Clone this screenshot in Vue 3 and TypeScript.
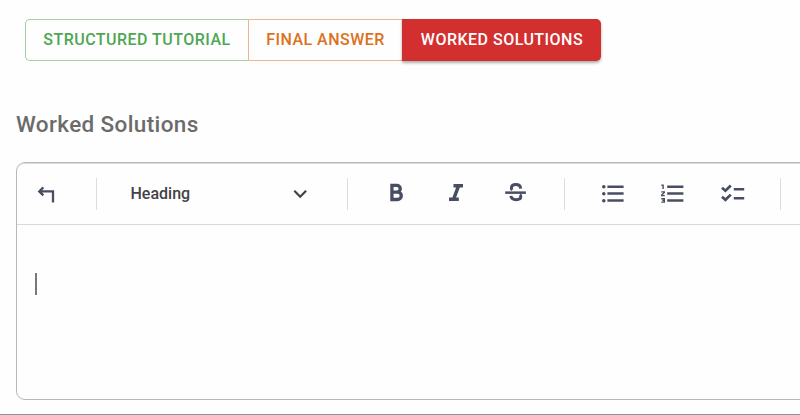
<script setup lang="ts">
import { ref } from 'vue'

interface Tab {
  id: string
  label: string
}

const tabs: Tab[] = [
  { id: 'tutorial', label: 'Structured Tutorial' },
  { id: 'answer', label: 'Final Answer' },
  { id: 'worked', label: 'Worked Solutions' },
]
const active = ref('worked')
</script>

<template>
  <main class="page">
    <div class="tabs">
      <button
        v-for="tab in tabs"
        :key="tab.id"
        type="button"
        class="tab"
        :class="[tab.id, { active: active === tab.id }]"
        @click="active = tab.id"
      >{{ tab.label }}</button>
    </div>
    <h2 class="title">Worked Solutions</h2>
    <section class="editor">
      <div class="toolbar">
        <button type="button" class="tool undo" aria-label="Undo">
          <svg viewBox="0 0 28 28"><path class="line" d="M10.3 7.4 6.3 11.4l4 4M6.3 11.4H20v11" /></svg>
        </button>
        <span class="sep"></span>
        <button type="button" class="block-type">
          <span class="block-name">Heading</span>
          <svg viewBox="0 0 16 16"><path d="M2.3 4.8 8.2 10.7 14.1 4.8" /></svg>
        </button>
        <span class="sep"></span>
        <div class="group marks">
          <button type="button" class="tool" aria-label="Bold">
            <svg viewBox="0 0 28 28"><path class="bold" d="M9.9 5.4h5a3.35 3.35 0 0 1 0 6.7h-5zM9.9 12.1h5.7a3.7 3.7 0 0 1 0 7.4H9.9z" /></svg>
          </button>
          <button type="button" class="tool" aria-label="Italic">
            <svg viewBox="0 0 28 28"><path class="solid" d="M11.5 4H21v3.4h-3.2l-3.7 10.2h2.7V21H7v-3.4h3.4l3.7-10.2h-2.6z" /></svg>
          </button>
          <button type="button" class="tool" aria-label="Strikethrough">
            <svg viewBox="0 0 28 28"><path class="strike" d="M18.7 8.6C18.4 5.8 16.5 4.6 14 4.6c-2.7 0-4.6 1.4-4.6 3.6 0 .8.3 1.3.8 1.8M17.8 14.7c.7.5 1 1.1 1 1.9 0 1.9-1.9 3.1-4.7 3.1-3.1 0-4.9-1.3-5.2-3.8" /><path class="solid" d="M3.2 11.4h20.7v2.5H3.2z" /></svg>
          </button>
        </div>
        <span class="sep"></span>
        <div class="group lists">
          <button type="button" class="tool" aria-label="Bulleted list">
            <svg viewBox="0 0 28 28"><path class="line thick" d="M8.4 6.7h16.2M8.4 13.6h16.2M8.4 20.6h16.2" /><g class="solid"><circle cx="4.8" cy="6.8" r="1.8" /><circle cx="4.8" cy="13.7" r="1.8" /><circle cx="4.8" cy="20.7" r="1.8" /></g></svg>
          </button>
          <button type="button" class="tool" aria-label="Numbered list">
            <svg viewBox="0 0 28 28"><path class="line thick" d="M8.2 6.7h16.2M8.2 13.6h16.2M8.2 20.6h16.2" /><path class="digit" d="M2.4 5.3h1.7v3.6M2.3 11.9h3v.6L2.7 15v.6h3.1M2.3 18.7h3v3.4h-3M3.3 20.4h2" /></svg>
          </button>
          <button type="button" class="tool" aria-label="Check list">
            <svg viewBox="0 0 28 28"><path class="line thick" d="M14.8 9.2h10.4M14.8 18.3h10.4" /><path class="line tick" d="m3 7.7 3.4 3 5.4-5.2M3 16.8l3.4 3 5.4-5.2" /></svg>
          </button>
        </div>
        <span class="sep"></span>
      </div>
      <div class="content"><span class="caret"></span></div>
    </section>
    <div class="footer-line"></div>
  </main>
</template>

<style>
body { background: #fefefe; overflow: hidden; }
</style>

<style scoped>
* { box-sizing: border-box; }
.page {
  width: 800px;
  height: 415px;
  display: flex;
  flex-direction: column;
  overflow: hidden;
  padding: 19px 0 0 16px;
  font-family: Roboto, sans-serif;
}
button { margin: 0; padding: 0; border: 0; background: none; font: inherit; flex: none; }
.tabs { display: flex; flex: none; height: 42px; margin-left: 9px; }
.tab {
  padding-bottom: 1px;
  border: 1px solid;
  border-right: 0;
  font-size: 16px;
  font-weight: 500;
  letter-spacing: 0.48px;
  text-transform: uppercase;
  white-space: nowrap;
}
.tutorial { width: 223px; color: #4fa653; border-color: #a1d1a3; border-radius: 5px 0 0 5px; }
.answer { width: 154px; color: #dc711c; border-color: #edb491; }
.worked { width: 199px; color: #d32f2f; border-radius: 0 5px 5px 0; }
.active { background: #d32f2f; border-color: #c93230; color: #fff; box-shadow: 0 2px 3px rgba(0, 0, 0, 0.32); }
.title {
  margin: 47px 0 0;
  flex: none;
  height: 32px;
  line-height: 32px;
  font-size: 22.5px;
  font-weight: 500;
  letter-spacing: 0.37px;
  color: #6b6b6b;
}
.editor {
  flex: none;
  width: 800px;
  height: 238px;
  margin-top: 22px;
  border: 1px solid #b8b8ba;
  border-radius: 9px;
}
.toolbar {
  display: flex;
  align-items: center;
  height: 62px;
  border-top: 1px solid #d9dce4;
  border-bottom: 1px solid #d4dae4;
  border-radius: 8px 0 0;
}
.sep { flex: none; width: 1px; height: 32px; background: #d9dde7; }
.tool { width: 28px; height: 28px; }
.tool svg { display: block; width: 28px; height: 28px; }
.undo { margin: 0 35px 0 16px; }
.block-type {
  display: flex;
  align-items: center;
  justify-content: space-between;
  width: 250px;
  padding: 0 39px 0 33.5px;
  font-size: 16px;
  font-weight: 500;
  color: #424247;
}
.block-name { padding-bottom: 2px; }
.block-type svg { width: 16px; height: 16px; fill: none; stroke: #424247; stroke-width: 2.2; }
.group { display: flex; flex: none; }
.marks { gap: 32px; margin: 0 34px 0 34px; }
.lists { gap: 32px; margin: 0 33px 0 34px; }
.line { fill: none; stroke: #484e62; stroke-width: 2.3; }
.thick { stroke-width: 2.5; }
.tick { stroke-width: 2.7; }
.solid { fill: #484e62; }
.bold { fill: none; stroke: #484e62; stroke-width: 3.3; }
.strike { fill: none; stroke: #484e62; stroke-width: 3; }
.digit { fill: none; stroke: #484e62; stroke-width: 1.4; }
.content { padding: 48px 18px; }
.caret { display: block; width: 2px; height: 22px; background: #77777c; }
.footer-line { flex: none; height: 1px; margin: 14px 0 0 -16px; background: #929292; }
</style>
